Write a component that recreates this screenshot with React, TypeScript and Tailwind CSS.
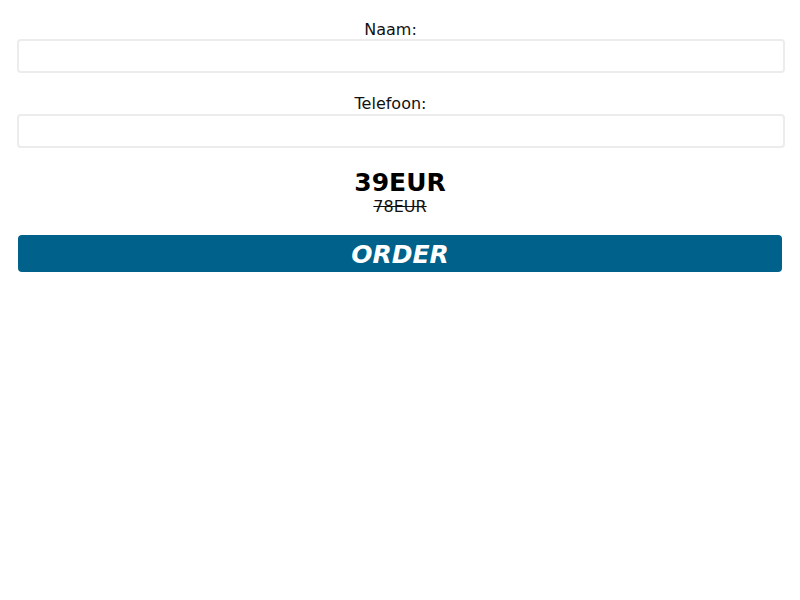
export default function App() {
  return (
    <div className="w-[800px] h-[600px] bg-white font-['DejaVu_Sans',sans-serif] text-[#111]">
      <form className="flex flex-col">
        <label className="block w-[781px] pt-[20px] text-center text-[16px] leading-[19px]">
          Naam:
        </label>
        <input
          type="text"
          className="ml-[17px] h-[34px] w-[768px] rounded-[4px] border-2 border-[#ececec] bg-white outline-none"
        />
        <label className="mt-[21px] block w-[781px] text-center text-[16px] leading-[20px]">
          Telefoon:
        </label>
        <input
          type="text"
          className="ml-[17px] h-[34px] w-[768px] rounded-[4px] border-2 border-[#ececec] bg-white outline-none"
        />
        <div className="mt-[22px] text-center text-[25px] font-bold leading-[26px] text-black">
          39EUR
        </div>
        <div className="mt-[1px] text-center text-[16px] leading-[20px] line-through text-[#111]">
          78EUR
        </div>
        <button
          type="button"
          className="ml-[18px] mt-[18px] h-[37px] w-[764px] rounded-[4px] bg-[#00618a] pt-[2px] text-[25px] font-bold italic leading-[35px] text-white"
        >
          ORDER
        </button>
      </form>
    </div>
  );
}
